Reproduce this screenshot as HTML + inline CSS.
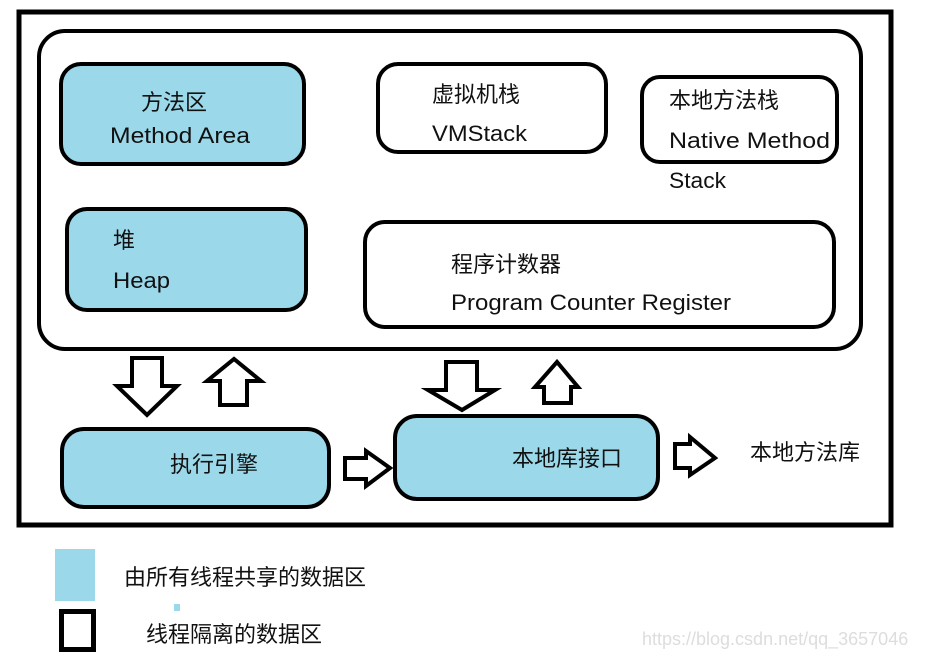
<!DOCTYPE html>
<html><head><meta charset="utf-8"><style>
body{margin:0;background:#fff;}
svg text{font-family:"Liberation Sans","Noto Sans CJK SC",sans-serif;font-size:22px;fill:#111;}
</style></head><body>
<svg width="930" height="661" xmlns="http://www.w3.org/2000/svg">
<rect x="19" y="12" width="872" height="513" fill="none" stroke="#000" stroke-width="5"/>
<rect x="39" y="31" width="822" height="318" rx="26" fill="none" stroke="#000" stroke-width="4"/>
<g stroke="#000" stroke-width="4">
<rect x="61" y="64" width="243" height="100" rx="20" fill="#9bd9ea"/>
<rect x="67" y="209" width="239" height="101" rx="20" fill="#9bd9ea"/>
<rect x="378" y="64" width="228" height="88" rx="20" fill="#fff"/>
<rect x="642" y="77" width="195" height="85" rx="18" fill="#fff"/>
<rect x="365" y="222" width="469" height="105" rx="20" fill="#fff"/>
<rect x="62" y="429" width="267" height="78" rx="22" fill="#9bd9ea"/>
<rect x="395" y="416" width="263" height="83" rx="22" fill="#9bd9ea"/>
</g>
<g stroke="#000" stroke-width="4" fill="#fff" stroke-linejoin="miter">
<path d="M132 358 H162 V386 H177 L147 415 L117 386 H132 Z"/>
<path d="M220 405 H247 V381 H261 L234 359 L207 381 H220 Z"/>
<path d="M446 362 H477 V390 H495 L462 410 L428 390 H446 Z"/>
<path d="M544 403 H571 V387 H578 L557 362 L535 387 H544 Z"/>
<path d="M345 458 H366 V451 L390 468 L366 486 V479 H345 Z"/>
<path d="M675 444 H690 V437 L715 458 L690 475 V468 H675 Z"/>
</g>
<text x="141" y="110">方法区</text>
<text x="110" y="143" textLength="140" lengthAdjust="spacingAndGlyphs">Method Area</text>
<text x="113" y="248">堆</text>
<text x="113" y="288" textLength="57" lengthAdjust="spacingAndGlyphs">Heap</text>
<text x="432" y="102">虚拟机栈</text>
<text x="432" y="141" textLength="95" lengthAdjust="spacingAndGlyphs">VMStack</text>
<text x="669" y="108">本地方法栈</text>
<text x="669" y="148" textLength="161" lengthAdjust="spacingAndGlyphs">Native Method</text>
<text x="669" y="188" textLength="57" lengthAdjust="spacingAndGlyphs">Stack</text>
<text x="451" y="272">程序计数器</text>
<text x="451" y="310" textLength="280" lengthAdjust="spacingAndGlyphs">Program Counter Register</text>
<text x="170" y="472">执行引擎</text>
<text x="512" y="466">本地库接口</text>
<text x="750" y="460">本地方法库</text>
<rect x="55" y="549" width="40" height="52" fill="#9bd9ea"/>
<rect x="174" y="604" width="6" height="7" fill="#9bd9ea"/>
<rect x="61.5" y="611.5" width="32" height="38" fill="#fff" stroke="#000" stroke-width="5"/>
<text x="124" y="585">由所有线程共享的数据区</text>
<text x="146" y="642">线程隔离的数据区</text>
<text x="642" y="645" style="font-size:18px;fill:#ddd">https://blog.csdn.net/qq_3657046</text>
</svg>
</body></html>
